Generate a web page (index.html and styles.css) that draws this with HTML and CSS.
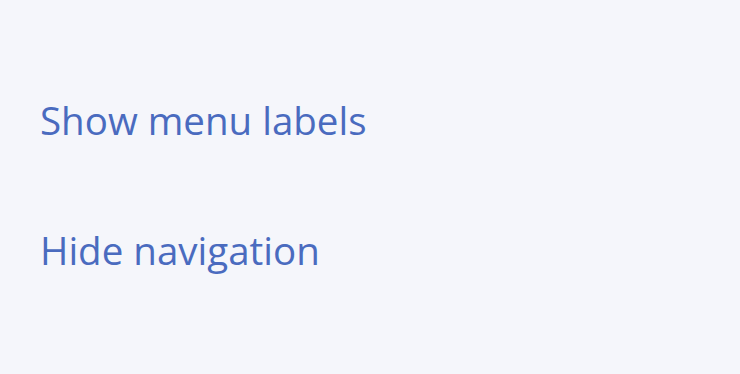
FILE: index.html
```html
<!DOCTYPE html>
<html lang="en">
<head>
  <meta charset="UTF-8">
  <title>Menu options</title>
  <link rel="stylesheet" href="styles.css">
</head>
<body>
  <ul class="menu">
    <li class="menu-item">Show menu labels</li>
    <li class="menu-item">Hide navigation</li>
  </ul>
</body>
</html>
```

FILE: styles.css
```css
body {
  margin: 0;
  background: #f5f6fb;
  font-family: "Open Sans", sans-serif;
}

.menu {
  list-style: none;
  margin: 0;
  padding: 95px 40px 0;
  display: flex;
  flex-direction: column;
  gap: 80px;
}

.menu-item {
  font-size: 38.5px;
  line-height: 50px;
  color: #4a6bbf;
}
```
